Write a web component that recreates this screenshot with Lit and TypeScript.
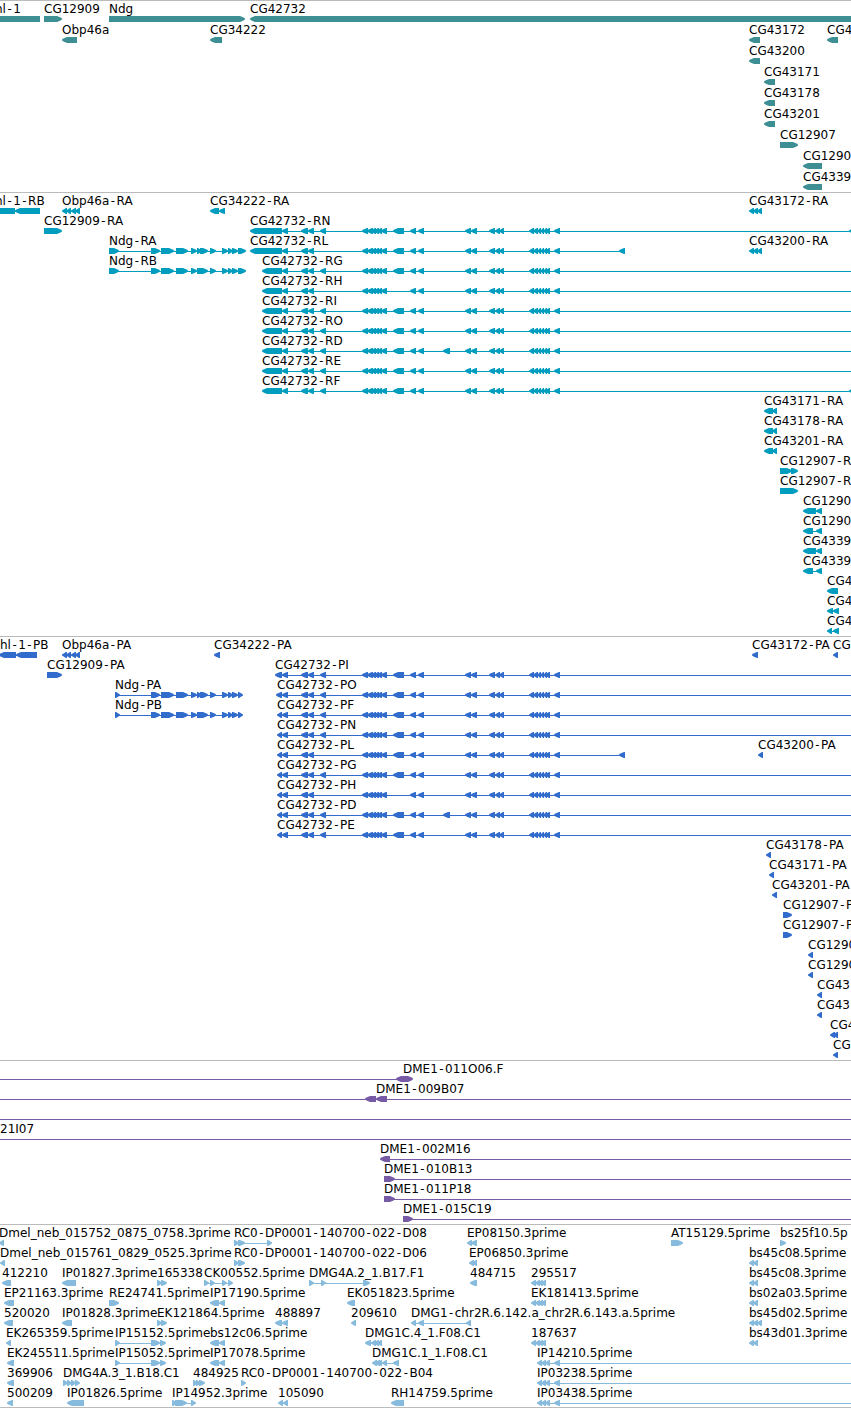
import { LitElement, html, svg, css } from "lit";
import { customElement, property } from "lit/decorators.js";

type Block = [number, number];
type Direction = "left" | "right" | "both" | "none";

interface Feature {
  name: string;
  at: number;
  direction: Direction;
  blocks: Block[];
  from?: number;
  to?: number;
}

interface Track {
  kind: string;
  title: string;
  rows: Feature[][];
}

/* Far outside any window: the feature runs on past the visible region. */
const BEFORE = -20;
const BEYOND = 6000;
const HEAD = 5;

const rev = (name: string, at: number, blocks: Block[], to?: number): Feature => ({
  name, at, direction: "left", blocks, to,
});
const fwd = (name: string, at: number, blocks: Block[], to?: number): Feature => ({
  name, at, direction: "right", blocks, to,
});

/* Exons of CG42732 shared by its transcripts and proteins. */
const introA: Block[] = [[282, 288], [301, 308], [308, 314]];
const small320: Block[] = [[320, 326]];
const clusterA: Block[] = [[362, 368], [367, 373], [371, 376], [374, 379], [377, 382], [381, 387]];
const wide394: Block[] = [[393, 404]];
const clusterB: Block[] = [[410, 416], [418, 424]];
const extra443: Block[] = [[443, 450]];
const clusterC: Block[] = [
  [465, 471], [471, 477], [489, 495], [495, 500], [499, 504],
  [529, 534], [533, 538], [537, 541], [540, 544], [543, 547], [545, 550], [554, 560],
];

function cg42732(suffix: string, at: number, first: Block): Feature {
  const kind = suffix[1];
  const short = kind === "L";
  const skip = kind === "H";
  const blocks: Block[] = [
    first,
    ...introA,
    ...(short || skip ? [] : small320),
    ...clusterA,
    ...(skip ? [] : wide394),
    ...clusterB,
    ...(kind === "D" ? extra443 : []),
    ...clusterC,
    ...(short ? ([[619, 625]] as Block[]) : []),
    ...(suffix === "RN" || suffix === "RF" ? ([[849, 855]] as Block[]) : []),
  ];
  return rev(`CG42732-${suffix}`, at, blocks, short ? 625 : BEYOND);
}

function ndg(suffix: string, first: Block, end: number): Feature {
  const middle: Block[] = suffix[1] === "A" ? [[197, 202], [200, 208]] : [[197, 208]];
  return fwd(`Ndg-${suffix}`, first[0], [
    first, [151, 160], [161, 174], [176, 188], [191, 197], ...middle,
    [210, 216], [222, 228], [228, 233], [232, 238], [238, end],
  ]);
}

const obp: Block[] = [[62, 67], [66, 71], [71, 76], [75, 80]];
const three749: Block[] = [[749, 754], [753, 758], [757, 762]];
const two749: Block[] = [[749, 754], [753, 758]];
const two764: Block[] = [[764, 773], [772, 777]];
const two210: Block[] = [[210, 219], [219, 225]];
const four531: Block[] = [[531, 536], [535, 540], [538, 543], [541, 546]];
const four537: Block[] = [[537, 542], [541, 546], [545, 550], [554, 560]];
const three115: Block[] = [[115, 120], [151, 160], [160, 166]];

const genes: Track = {
  kind: "genes",
  title: "Genes",
  rows: [
    [
      { name: "hl-1", at: -5, direction: "none", blocks: [[BEFORE, 40]] },
      fwd("CG12909", 44, [[44, 62]]),
      fwd("Ndg", 109, [[109, 245]]),
      rev("CG42732", 250, [[250, BEYOND]]),
    ],
    [
      rev("Obp46a", 62, [[62, 77]]),
      rev("CG34222", 210, [[210, 222]]),
      rev("CG43172", 749, [[749, 760]]),
      rev("CG4", 827, [[827, 838]]),
    ],
    [rev("CG43200", 749, [[749, 760]])],
    [rev("CG43171", 764, [[764, 775]])],
    [rev("CG43178", 764, [[764, 775]])],
    [rev("CG43201", 764, [[764, 775]])],
    [fwd("CG12907", 780, [[780, 798]])],
    [rev("CG1290", 803, [[803, 822]])],
    [rev("CG4339", 803, [[803, 822]])],
  ],
};

const transcripts: Track = {
  kind: "transcripts",
  title: "Transcripts",
  rows: [
    [
      rev("hl-1-RB", -5, [[BEFORE, 15], [15, 40]]),
      rev("Obp46a-RA", 62, obp),
      rev("CG34222-RA", 210, two210),
      rev("CG43172-RA", 749, three749),
    ],
    [fwd("CG12909-RA", 44, [[44, 62]]), cg42732("RN", 250, [250, 282])],
    [ndg("RA", [109, 119], 246), cg42732("RL", 250, [250, 282]), rev("CG43200-RA", 749, three749)],
    [ndg("RB", [109, 119], 246), cg42732("RG", 262, [262, 282])],
    ...["RH", "RI", "RO", "RD", "RE", "RF"].map((s) => [cg42732(s, 262, [262, 282])]),
    [rev("CG43171-RA", 764, two764)],
    [rev("CG43178-RA", 764, two764)],
    [rev("CG43201-RA", 764, two764)],
    [fwd("CG12907-R", 780, [[780, 792], [791, 798]])],
    [fwd("CG12907-R", 780, [[780, 798]])],
    [rev("CG1290", 803, [[803, 816], [816, 822]])],
    [rev("CG1290", 803, [[803, 813], [816, 822]])],
    [rev("CG4339", 803, [[803, 816], [816, 822]])],
    [rev("CG4339", 803, [[803, 813], [816, 822]])],
    [rev("CG4", 827, [[827, 838]])],
    [rev("CG4", 827, [[827, 833], [833, 839]])],
    [rev("CG4", 827, [[827, 832], [833, 839]])],
  ],
};

const proteins: Track = {
  kind: "proteins",
  title: "Proteins",
  rows: [
    [
      rev("hl-1-PB", 0, [[-1, 16], [16, 37]]),
      rev("Obp46a-PA", 62, obp),
      rev("CG34222-PA", 214, [[214, 220]]),
      rev("CG43172-PA", 752, [[752, 758]]),
      rev("CG", 833, [[833, 838]]),
    ],
    [fwd("CG12909-PA", 47, [[47, 62]]), cg42732("PI", 275, [275, 282])],
    [ndg("PA", [115, 120], 243), cg42732("PO", 277, [276, 282])],
    [ndg("PB", [115, 120], 243), cg42732("PF", 277, [277, 282])],
    [cg42732("PN", 277, [277, 282])],
    [cg42732("PL", 277, [277, 282]), rev("CG43200-PA", 758, [[758, 763]])],
    ...["PG", "PH", "PD", "PE"].map((s) => [cg42732(s, 277, [277, 282])]),
    [rev("CG43178-PA", 766, [[766, 771]])],
    [rev("CG43171-PA", 769, [[769, 774]])],
    [rev("CG43201-PA", 772, [[772, 777]])],
    [fwd("CG12907-P", 783, [[783, 792]])],
    [fwd("CG12907-P", 783, [[783, 792]])],
    [rev("CG1290", 808, [[808, 813]])],
    [rev("CG1290", 808, [[808, 813]])],
    [rev("CG43", 817, [[817, 822]])],
    [rev("CG43", 817, [[817, 822]])],
    [rev("CG4", 830, [[830, 835], [833, 838]])],
    [rev("CG", 833, [[833, 838]])],
  ],
};

const clones: Track = {
  kind: "clones",
  title: "Clones",
  rows: [
    [{ name: "DME1-011O06.F", at: 403, direction: "both", blocks: [[396, 413]], from: BEFORE }],
    [{ ...rev("DME1-009B07", 376, [[365, 376], [376, 387]], BEYOND), from: BEFORE }],
    [{ name: "", at: 0, direction: "none", blocks: [], from: BEFORE, to: BEYOND }],
    [{ name: "21I07", at: 0, direction: "none", blocks: [], from: BEFORE, to: BEYOND }],
    [rev("DME1-002M16", 380, [[380, 390]], BEYOND)],
    [fwd("DME1-010B13", 384, [[384, 395]], BEYOND)],
    [fwd("DME1-011P18", 384, [[384, 395]], BEYOND)],
    [fwd("DME1-015C19", 403, [[403, 413]], BEYOND)],
  ],
};

const ests: Track = {
  kind: "ests",
  title: "ESTs",
  rows: [
    [
      rev("Dmel_neb_015752_0875_0758.3prime", -1, [[-1, 4]]),
      fwd("RC0-DP0001-140700-022-D08", 234, [[234, 239], [238, 245], [267, 272]]),
      rev("EP08150.3prime", 467, [[467, 472], [471, 477]]),
      fwd("AT15129.5prime", 671, [[671, 683]]),
      fwd("bs25f10.5p", 780, [[780, 786]]),
    ],
    [
      rev("Dmel_neb_015761_0829_0525.3prime", 0, [[0, 5]]),
      fwd("RC0-DP0001-140700-022-D06", 234, [[234, 239], [238, 245]]),
      rev("EP06850.3prime", 469, [[469, 474], [472, 477]]),
      rev("bs45c08.5prime", 749, two749),
    ],
    [
      rev("412210", 2, [[2, 11]]),
      rev("IP01827.3prime", 62, [[62, 76]]),
      fwd("165338", 157, [[157, 162], [161, 167]]),
      fwd("CK00552.5prime", 204, [[204, 209], [210, 215], [222, 227], [228, 233]]),
      fwd("DMG4A.2_1.B17.F1", 309, [[309, 314], [321, 326], [363, 370]]),
      rev("484715", 470, [[470, 477]]),
      rev("295517", 531, four531),
      rev("bs45c08.3prime", 749, two749),
    ],
    [
      rev("EP21163.3prime", 4, [[4, 14]]),
      fwd("RE24741.5prime", 109, [[109, 119]]),
      rev("IP17190.5prime", 210, two210),
      rev("EK051823.5prime", 347, [[347, 355]]),
      rev("EK181413.5prime", 531, four531),
      rev("bs02a03.5prime", 749, two749),
    ],
    [
      rev("520020", 4, [[4, 13]]),
      rev("IP01828.3prime", 62, [[62, 72]]),
      fwd("EK121864.5prime", 157, [[157, 162], [161, 167]]),
      rev("488897", 275, [[275, 282], [282, 288]]),
      rev("209610", 351, [[351, 356]]),
      rev("DMG1-chr2R.6.142.a_chr2R.6.143.a.5prime", 411, [[411, 416], [418, 424], [466, 471]]),
      rev("bs45d02.5prime", 749, three749),
    ],
    [
      rev("EK265359.5prime", 6, [[6, 11]]),
      fwd("IP15152.5prime", 115, three115),
      rev("bs12c06.5prime", 210, two210),
      rev("DMG1C.4_1.F08.C1", 365, [[365, 371], [371, 376], [374, 379], [377, 382]]),
      rev("187637", 531, four531),
      rev("bs43d01.3prime", 749, two749),
    ],
    [
      rev("EK245511.5prime", 7, [[7, 14]]),
      fwd("IP15052.5prime", 115, three115),
      rev("IP17078.5prime", 210, two210),
      rev("DMG1C.1_1.F08.C1", 372, [[372, 377], [375, 380], [377, 382], [382, 387], [393, 399]]),
      rev("IP14210.5prime", 537, four537, BEYOND),
    ],
    [
      rev("369906", 7, [[7, 14]]),
      fwd("DMG4A.3_1.B18.C1", 63, [[63, 68], [67, 72], [71, 76], [75, 80]]),
      fwd("484925", 193, [[193, 198], [196, 201], [199, 205]]),
      fwd("RC0-DP0001-140700-022-B04", 241, [[241, 246]]),
      rev("IP03238.5prime", 537, four537, BEYOND),
    ],
    [
      rev("500209", 7, [[7, 13]]),
      rev("IP01826.5prime", 67, [[67, 84]]),
      fwd("IP14952.3prime", 172, [[172, 177], [175, 187], [191, 196]]),
      rev("105090", 278, [[278, 283], [283, 288]]),
      rev("RH14759.5prime", 391, [[391, 404]]),
      rev("IP03438.5prime", 537, four537, BEYOND),
    ],
  ],
};

/* A bar whose pointed ends swell quickly from a blunt, one-pixel tip. */
function outline([x1, x2]: Block, direction: Direction): string {
  const left = direction === "left" || direction === "both";
  const right = direction === "right" || direction === "both";
  const head = Math.min(HEAD, x2 - x1 - 1);
  const top: string[] = [];
  const bottom: string[] = [];
  if (left) {
    top.push(`${x1},2.5 ${x1 + 2},1.2 ${x1 + head},0`);
    bottom.push(`${x1 + head},6 ${x1 + 2},4.8 ${x1},3.5`);
  } else {
    top.push(`${x1},0`);
    bottom.push(`${x1},6`);
  }
  if (right) {
    top.push(`${x2 - head},0 ${x2 - 2},1.2 ${x2},2.5`);
    bottom.unshift(`${x2},3.5 ${x2 - 2},4.8 ${x2 - head},6`);
  } else {
    top.push(`${x2},0`);
    bottom.unshift(`${x2},6`);
  }
  return [...top, ...bottom].join(" ");
}

@customElement("genome-track")
export class GenomeTrack extends LitElement {
  @property({ attribute: false }) track!: Track;

  static styles = css`
    :host {
      display: block;
      border-top: 1px solid #bbbbbb;
      padding-bottom: 3px;
    }
    .row {
      height: 20px;
    }
    .genes .row {
      height: 21px;
    }
    .genes {
      color: #3d8f94;
    }
    .transcripts {
      color: #009dbf;
    }
    .proteins {
      color: #316bcc;
    }
    .clones {
      color: #775aa6;
    }
    .ests {
      color: #87bbdd;
    }
    .names {
      position: relative;
      height: 15px;
    }
    .name {
      position: absolute;
      top: 0;
      color: #000000;
      font-size: 12px;
      line-height: 16px;
      white-space: nowrap;
    }
    .dash {
      font-family: "DejaVu Sans Mono", monospace;
    }
    .shapes {
      display: block;
      width: 100%;
      height: 6px;
      fill: currentColor;
    }
  `;

  private label(name: string) {
    return name.split("-").map((part, i) => (i ? html`<span class="dash">-</span>${part}` : part));
  }

  private shapes(f: Feature) {
    const start = f.from ?? f.blocks[0][0];
    const end = f.to ?? f.blocks[f.blocks.length - 1][1];
    const joined = f.blocks.length !== 1 || f.from !== undefined || f.to !== undefined;
    return svg`
      ${joined ? svg`<rect x=${start + 1} y="3" width=${end - start - 2} height="1"></rect>` : ""}
      ${f.blocks.map((b) => svg`<polygon points=${outline(b, f.direction)}></polygon>`)}
    `;
  }

  render() {
    return html`
      <section class=${this.track.kind} aria-label=${this.track.title}>
        ${this.track.rows.map(
          (row) => html`
            <div class="row">
              <div class="names">
                ${row.map((f) => html`<span class="name" style="left:${f.at}px">${this.label(f.name)}</span>`)}
              </div>
              <svg class="shapes" aria-hidden="true">${row.map((f) => this.shapes(f))}</svg>
            </div>
          `
        )}
      </section>
    `;
  }
}

@customElement("app-root")
export class AppRoot extends LitElement {
  static styles = css`
    :host {
      display: block;
      overflow: hidden;
      background: #ffffff;
      font-family: "DejaVu Sans", sans-serif;
    }
    .edge {
      padding-bottom: 2px;
    }
    .last {
      border-bottom: 1px solid #bbbbbb;
    }
  `;

  render() {
    return html`
      <main>
        <genome-track class="edge" .track=${genes}></genome-track>
        <genome-track .track=${transcripts}></genome-track>
        <genome-track .track=${proteins}></genome-track>
        <genome-track .track=${clones}></genome-track>
        <genome-track class="edge last" .track=${ests}></genome-track>
      </main>
    `;
  }
}
